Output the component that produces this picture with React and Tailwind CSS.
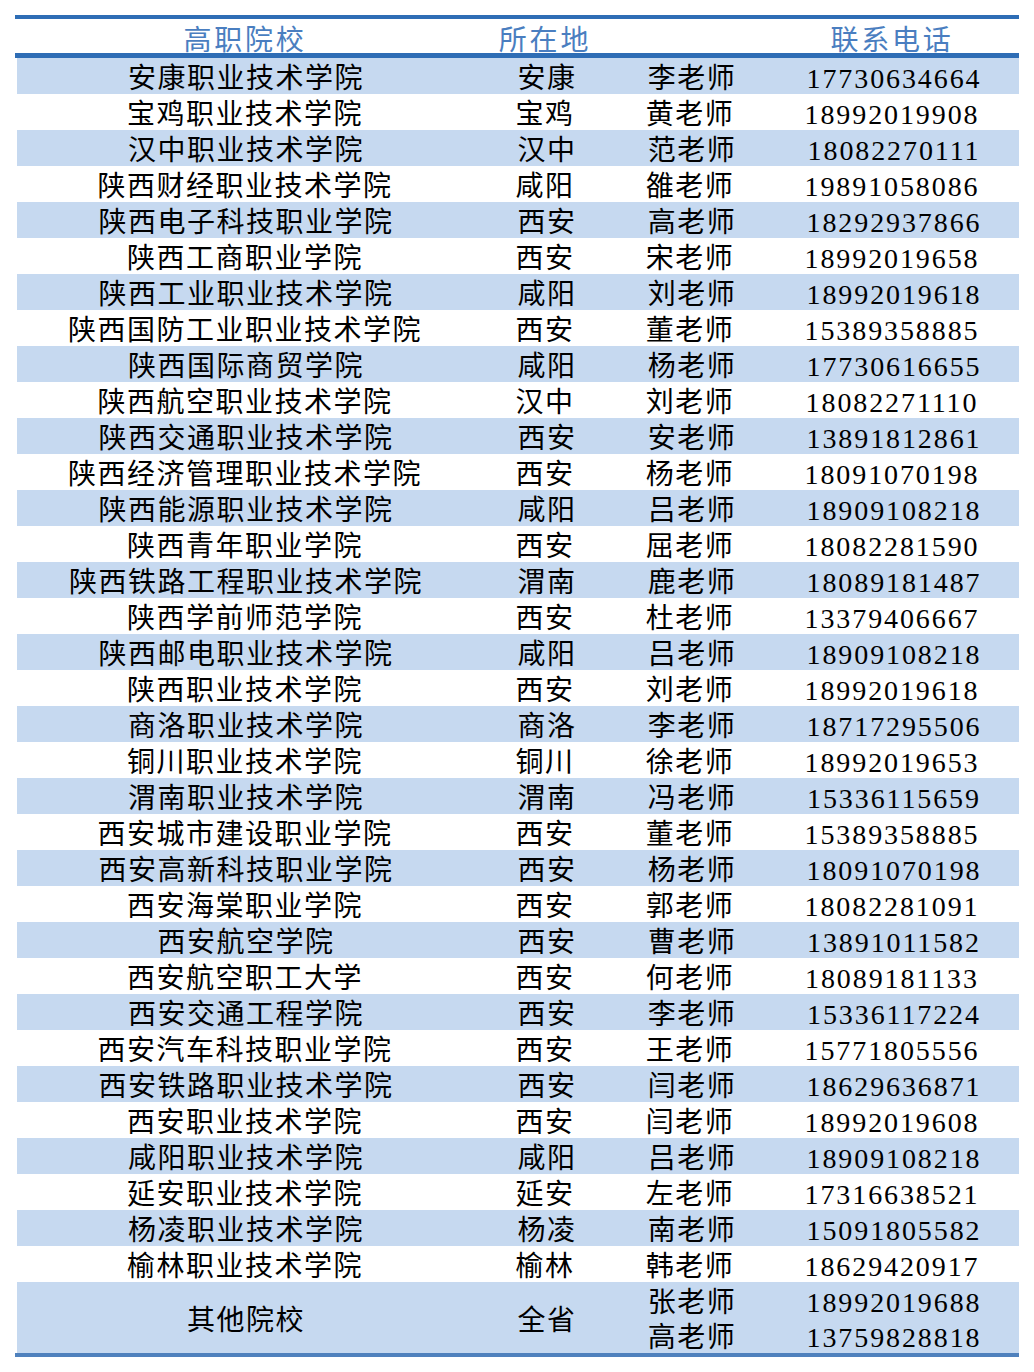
// App.jsx
import React from "react";

const rows = [
  ["安康职业技术学院", "安康", "李老师", "17730634664"],
  ["宝鸡职业技术学院", "宝鸡", "黄老师", "18992019908"],
  ["汉中职业技术学院", "汉中", "范老师", "18082270111"],
  ["陕西财经职业技术学院", "咸阳", "雒老师", "19891058086"],
  ["陕西电子科技职业学院", "西安", "高老师", "18292937866"],
  ["陕西工商职业学院", "西安", "宋老师", "18992019658"],
  ["陕西工业职业技术学院", "咸阳", "刘老师", "18992019618"],
  ["陕西国防工业职业技术学院", "西安", "董老师", "15389358885"],
  ["陕西国际商贸学院", "咸阳", "杨老师", "17730616655"],
  ["陕西航空职业技术学院", "汉中", "刘老师", "18082271110"],
  ["陕西交通职业技术学院", "西安", "安老师", "13891812861"],
  ["陕西经济管理职业技术学院", "西安", "杨老师", "18091070198"],
  ["陕西能源职业技术学院", "咸阳", "吕老师", "18909108218"],
  ["陕西青年职业学院", "西安", "屈老师", "18082281590"],
  ["陕西铁路工程职业技术学院", "渭南", "鹿老师", "18089181487"],
  ["陕西学前师范学院", "西安", "杜老师", "13379406667"],
  ["陕西邮电职业技术学院", "咸阳", "吕老师", "18909108218"],
  ["陕西职业技术学院", "西安", "刘老师", "18992019618"],
  ["商洛职业技术学院", "商洛", "李老师", "18717295506"],
  ["铜川职业技术学院", "铜川", "徐老师", "18992019653"],
  ["渭南职业技术学院", "渭南", "冯老师", "15336115659"],
  ["西安城市建设职业学院", "西安", "董老师", "15389358885"],
  ["西安高新科技职业学院", "西安", "杨老师", "18091070198"],
  ["西安海棠职业学院", "西安", "郭老师", "18082281091"],
  ["西安航空学院", "西安", "曹老师", "13891011582"],
  ["西安航空职工大学", "西安", "何老师", "18089181133"],
  ["西安交通工程学院", "西安", "李老师", "15336117224"],
  ["西安汽车科技职业学院", "西安", "王老师", "15771805556"],
  ["西安铁路职业技术学院", "西安", "闫老师", "18629636871"],
  ["西安职业技术学院", "西安", "闫老师", "18992019608"],
  ["咸阳职业技术学院", "咸阳", "吕老师", "18909108218"],
  ["延安职业技术学院", "延安", "左老师", "17316638521"],
  ["杨凌职业技术学院", "杨凌", "南老师", "15091805582"],
  ["榆林职业技术学院", "榆林", "韩老师", "18629420917"],
];

const cols = "grid grid-cols-[460px_140px_150px_254px]";

export default function App() {
  return (
    <div className="min-h-screen bg-white pt-[15px] pl-[15px] text-black [font-family:'Liberation_Serif','Noto_Sans_CJK_SC',serif]">
      <div className="w-[1004px]">
        {/* 表头 */}
        <div className="border-t-4 border-b-[5px] border-[#2e6db5]">
          <div className={`${cols} h-[34px] items-end text-[28px] leading-none tracking-[2.8px] text-[#4a7ec0]`}>
            <div className="text-center -mb-[2px]">高职院校</div>
            <div className="text-center -mb-[2px]">所在地</div>
            <div />
            <div className="text-center -mb-[2px]">联系电话</div>
          </div>
        </div>

        {/* 数据 */}
        <div className="border-b-4 border-[#4f81bd]">
          {rows.map(([name, city, teacher, phone], i) => (
            <div
              key={i}
              className={`${cols} h-[36px] pt-[6px] items-center text-[28px] leading-none tracking-[1.5px] ${i % 2 === 0 ? "bg-[#c6d9f0] ml-[2px]" : ""}`}
            >
              <div className={`text-center ${i % 2 === 0 ? "-ml-[2px]" : ""}`}>{name}</div>
              <div className="text-center">{city}</div>
              <div className="text-center">{teacher}</div>
              <div className="text-center tracking-[1.9px]">{phone}</div>
            </div>
          ))}

          <div className={`${cols} h-[71px] ml-[2px] items-center bg-[#c6d9f0] text-[28px] leading-none tracking-[1.5px]`}>
            <div className="text-center -ml-[2px] pt-[6px]">其他院校</div>
            <div className="text-center pt-[6px]">全省</div>
            <div className="col-span-2 flex flex-col">
              <div className="grid grid-cols-[150px_254px] h-[35px] pt-[6px] items-center">
                <div className="text-center">张老师</div>
                <div className="text-center tracking-[1.9px]">18992019688</div>
              </div>
              <div className="grid grid-cols-[150px_254px] h-[36px] pt-[6px] items-center">
                <div className="text-center">高老师</div>
                <div className="text-center tracking-[1.9px]">13759828818</div>
              </div>
            </div>
          </div>
        </div>
      </div>
    </div>
  );
}
